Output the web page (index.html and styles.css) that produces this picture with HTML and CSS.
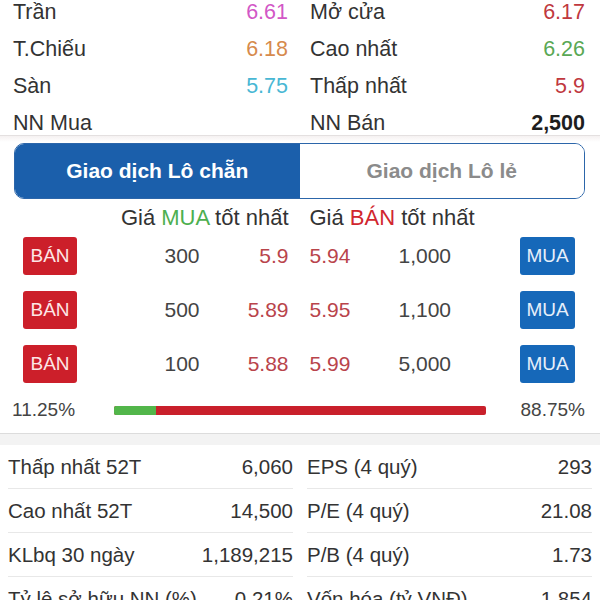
FILE: index.html
```html
<!doctype html>
<html lang="vi">
	<head>
		<meta charset="UTF-8" />
		<meta name="viewport" content="width=device-width, initial-scale=1.0" />
		<title>Chi tiết mã</title>
		<link rel="stylesheet" href="styles.css">
	</head>
	<body>
		<div class="screen">
			<!-- Giá tham chiếu -->
			<section class="quote">
				<div class="stat"><span>Trần</span><span class="v-ceil">6.61</span></div>
				<div class="stat"><span>Mở cửa</span><span class="v-down">6.17</span></div>
				<div class="stat"><span>T.Chiếu</span><span class="v-ref">6.18</span></div>
				<div class="stat"><span>Cao nhất</span><span class="v-up">6.26</span></div>
				<div class="stat"><span>Sàn</span><span class="v-floor">5.75</span></div>
				<div class="stat"><span>Thấp nhất</span><span class="v-down">5.9</span></div>
				<div class="stat"><span>NN Mua</span><span></span></div>
				<div class="stat"><span>NN Bán</span><span class="v-strong">2,500</span></div>
			</section>

			<!-- Sổ lệnh -->
			<section class="book">
				<div class="tabs">
					<button class="tab active">Giao dịch Lô chẵn</button>
					<button class="tab">Giao dịch Lô lẻ</button>
				</div>
				<div class="book-head">
					<div class="head-bid">Giá <span class="t-buy">MUA</span> tốt nhất</div>
					<div>Giá <span class="t-sell">BÁN</span> tốt nhất</div>
				</div>
				<div class="book-row">
					<div class="side side-bid">
						<button class="btn btn-sell">BÁN</button>
						<span class="qty">300</span>
						<span class="price">5.9</span>
					</div>
					<div class="side side-ask">
						<span class="price">5.94</span>
						<span class="qty">1,000</span>
						<button class="btn btn-buy">MUA</button>
					</div>
				</div>
				<div class="book-row">
					<div class="side side-bid">
						<button class="btn btn-sell">BÁN</button>
						<span class="qty">500</span>
						<span class="price">5.89</span>
					</div>
					<div class="side side-ask">
						<span class="price">5.95</span>
						<span class="qty">1,100</span>
						<button class="btn btn-buy">MUA</button>
					</div>
				</div>
				<div class="book-row">
					<div class="side side-bid">
						<button class="btn btn-sell">BÁN</button>
						<span class="qty">100</span>
						<span class="price">5.88</span>
					</div>
					<div class="side side-ask">
						<span class="price">5.99</span>
						<span class="qty">5,000</span>
						<button class="btn btn-buy">MUA</button>
					</div>
				</div>
				<div class="ratio">
					<span>11.25%</span>
					<div class="ratio-bar"><div class="ratio-bid" style="width: 11.25%"></div></div>
					<span class="ratio-right">88.75%</span>
				</div>
			</section>

			<!-- Chỉ số cơ bản -->
			<section class="stats">
				<div class="stats-cell"><span>Thấp nhất 52T</span><span>6,060</span></div>
				<div class="stats-cell"><span>EPS (4 quý)</span><span>293</span></div>
				<div class="stats-cell"><span>Cao nhất 52T</span><span>14,500</span></div>
				<div class="stats-cell"><span>P/E (4 quý)</span><span>21.08</span></div>
				<div class="stats-cell"><span>KLbq 30 ngày</span><span>1,189,215</span></div>
				<div class="stats-cell"><span>P/B (4 quý)</span><span>1.73</span></div>
				<div class="stats-cell"><span>Tỷ lệ sở hữu NN (%)</span><span>0.21%</span></div>
				<div class="stats-cell"><span>Vốn hóa (tỷ VNĐ)</span><span>1,854</span></div>
			</section>
		</div>
	</body>
</html>
```

FILE: styles.css
```css
body {
	margin: 0;
	overflow: hidden;
	background-color: #fff;
	font-family: "Liberation Sans", Arial, sans-serif;
	color: #333;
}
.screen {
	width: 600px;
	height: 600px;
	overflow: hidden;
}

/* top quote block */
.quote {
	display: grid;
	grid-template-columns: 1fr 1fr;
	grid-template-rows: 37px 37px 37px 30px;
	column-gap: 22px;
	margin-top: -6px;
	padding: 0 15px 0 13px;
	border-bottom: 1px solid #e4e0e0;
	font-size: 21.5px;
}
.stat {
	display: flex;
	justify-content: space-between;
	line-height: 37px;
	white-space: nowrap;
}
.v-ceil { color: #d257c6; }
.v-ref { color: #d68a4c; }
.v-floor { color: #48b7d4; }
.v-up { color: #5aa855; }
.v-down { color: #c0383e; }
.v-strong {
	color: #1e1e1e;
	font-weight: bold;
}

/* order book */
.book {
	padding: 7px 0 12px;
	background: linear-gradient(#f5f1f1, #fff 6px) no-repeat;
	border-bottom: 1px solid #dcdcdc;
}
.tabs {
	display: grid;
	grid-template-columns: 1fr 1fr;
	height: 56px;
	margin: 0 15px 0 14px;
	border: 1.5px solid #2c66aa;
	border-radius: 10px;
	overflow: hidden;
	box-sizing: border-box;
}
.tab {
	border: none;
	margin: 0;
	padding: 0;
	background-color: #fff;
	color: #8b8b8b;
	font-family: inherit;
	font-size: 21px;
	font-weight: bold;
}
.tab.active {
	background-color: #1b5fab;
	color: #fff;
}
.book-head,
.book-row {
	display: grid;
	grid-template-columns: 1fr 1fr;
	column-gap: 21px;
	padding: 0 25px 0 23px;
}
.book-head {
	height: 38px;
	line-height: 38px;
	font-size: 22px;
	white-space: nowrap;
}
.head-bid {
	text-align: right;
}
.t-buy { color: #4daf4f; }
.t-sell { color: #d1262e; }
.book-row {
	height: 38px;
	margin-bottom: 16px;
	font-size: 21px;
}
.side {
	display: grid;
	align-items: center;
}
.side-bid {
	grid-template-columns: 54px 1fr 89px;
	text-align: right;
}
.side-ask {
	grid-template-columns: 89px 1fr 55px;
}
.qty {
	color: #444;
}
.price {
	color: #b9444b;
}
.btn {
	height: 38px;
	border: none;
	border-radius: 3px;
	padding: 0;
	font-family: inherit;
	font-size: 19px;
}
.btn-sell {
	background-color: #cc1f2a;
	color: #fde6e6;
}
.btn-buy {
	background-color: #1668b9;
	color: #e6effa;
}
.ratio {
	display: grid;
	grid-template-columns: 102px 1fr 99px;
	align-items: center;
	height: 22px;
	padding: 0 15px 0 12px;
	font-size: 19px;
	color: #444;
}
.ratio-right {
	text-align: right;
}
.ratio-bar {
	height: 9px;
	border-radius: 2px;
	background-color: #c9202b;
	overflow: hidden;
}
.ratio-bid {
	height: 100%;
	background-color: #52b64a;
}

/* fundamentals */
.stats {
	display: grid;
	grid-template-columns: 1fr 1fr;
	column-gap: 14px;
	padding: 0 8px;
	border-top: 11px solid #f3f3f3;
	font-size: 20.5px;
}
.stats-cell {
	display: flex;
	justify-content: space-between;
	align-items: center;
	height: 44px;
	border-bottom: 1px solid #e8e8e8;
	box-sizing: border-box;
	white-space: nowrap;
}
```
